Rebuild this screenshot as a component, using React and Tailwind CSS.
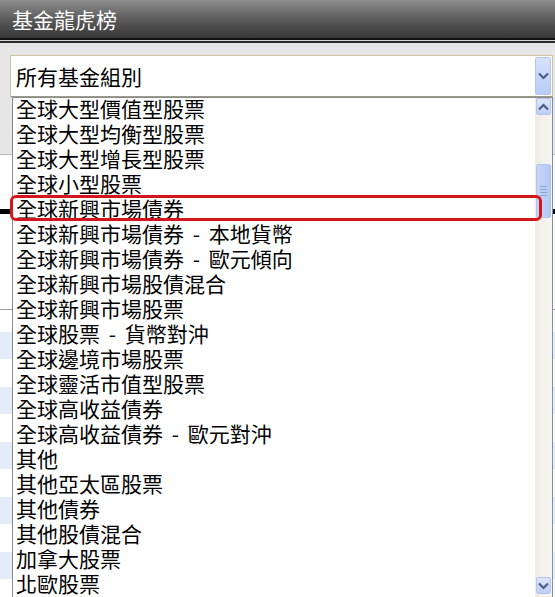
import React from "react";

const items = [
  "全球大型價值型股票",
  "全球大型均衡型股票",
  "全球大型增長型股票",
  "全球小型股票",
  "全球新興市場債券",
  "全球新興市場債券 - 本地貨幣",
  "全球新興市場債券 - 歐元傾向",
  "全球新興市場股債混合",
  "全球新興市場股票",
  "全球股票 - 貨幣對沖",
  "全球邊境市場股票",
  "全球靈活市值型股票",
  "全球高收益債券",
  "全球高收益債券 - 歐元對沖",
  "其他",
  "其他亞太區股票",
  "其他債券",
  "其他股債混合",
  "加拿大股票",
  "北歐股票",
];

function ChevronDown() {
  return (
    <svg width="11" height="8" viewBox="0 0 11 8">
      <path d="M1 1.5 L5.5 6 L10 1.5" fill="none" stroke="#4a5d82" strokeWidth="2.2" />
    </svg>
  );
}

function ChevronUp() {
  return (
    <svg width="11" height="8" viewBox="0 0 11 8">
      <path d="M1 6.5 L5.5 2 L10 6.5" fill="none" stroke="#4a5d82" strokeWidth="2.2" />
    </svg>
  );
}

export default function App() {
  return (
    <div
      className="relative w-[555px] h-[597px] overflow-hidden bg-white flex flex-col"
      style={{ fontFamily: '"Noto Sans CJK TC", "Noto Sans", sans-serif' }}
    >
      {/* Title bar */}
      <div className="h-[38px] shrink-0 bg-gradient-to-b from-[#8f8f8f] via-[#5c5c5c] to-[#363636] flex items-center pl-[12px]">
        <span className="text-white text-[21px] leading-[26px]">基金龍虎榜</span>
      </div>
      <div className="h-[2px] bg-[#101010] shrink-0" />
      <div className="h-px bg-[#d4d4d4] shrink-0" />
      <div className="h-[2px] bg-[#2a2a2a] shrink-0" />

      {/* Gray filter area */}
      <div className="h-[112px] shrink-0 bg-[#e6e6e6] border-b border-[#b8b8b8] pt-[12px] pl-[10px] pr-[2px]">
        <div className="h-[42px] bg-white border border-[#d2c398] border-b-[#9c9a8c] flex items-center pl-[5px] pr-px">
          <span className="flex-1 text-[21px] leading-[26px] text-black">所有基金組別</span>
          <div className="w-[16px] h-[38px] rounded-[2px] border border-[#b3c5ee] bg-gradient-to-b from-[#d6e2fb] to-[#b8cdf6] flex items-center justify-center">
            <ChevronDown />
          </div>
        </div>
      </div>

      {/* Page content behind the list */}
      <div className="flex-1 flex flex-col bg-white">
        <div className="h-[54px] shrink-0" />
        <div className="h-[5px] bg-black shrink-0" />
        <div className="h-[95px] shrink-0" />
        <div className="h-px bg-[#9a9a9a] shrink-0" />
        <div className="h-[22px] shrink-0" />
        <div className="h-[27px] bg-[#e4ecf8] shrink-0" />
        <div className="h-[28px] shrink-0" />
        <div className="h-[27px] bg-[#e4ecf8] shrink-0" />
        <div className="h-[28px] shrink-0" />
        <div className="h-[27px] bg-[#e4ecf8] shrink-0" />
        <div className="h-[28px] shrink-0" />
        <div className="h-[27px] bg-[#e4ecf8] shrink-0" />
        <div className="h-[28px] shrink-0" />
        <div className="h-[27px] bg-[#e4ecf8] shrink-0" />
      </div>

      {/* Dropdown list overlay */}
      <div className="absolute left-[12px] top-[97px] w-[541px] h-[501px] bg-white border border-[#8a8a8a] border-r-[#7d8db0] flex">
        <div className="flex-1 flex flex-col -mt-[2px] overflow-hidden">
          {items.map((t) => (
            <div
              key={t}
              className="h-[25px] shrink-0 pl-[3px] text-[21px] leading-[25px] text-black whitespace-nowrap [word-spacing:4px]"
            >
              {t}
            </div>
          ))}
        </div>
        {/* Scrollbar */}
        <div className="w-[17px] flex flex-col bg-gradient-to-r from-[#eeece4] to-[#f7f6f1]">
          <div className="h-[17px] mx-px rounded-[2px] border border-[#b3c5ee] bg-gradient-to-b from-[#dce6fb] to-[#bccff6] flex items-center justify-center">
            <ChevronUp />
          </div>
          <div className="flex-1">
            <div className="mt-[49px] mx-px h-[54px] rounded-[2px] border border-[#b3c5ee] bg-gradient-to-r from-[#c5d6f8] to-[#b5c9f3] flex flex-col items-center justify-center gap-[2px]">
              <div className="w-[7px] h-px bg-[#8da3d4]" />
              <div className="w-[7px] h-px bg-[#8da3d4]" />
              <div className="w-[7px] h-px bg-[#8da3d4]" />
              <div className="w-[7px] h-px bg-[#8da3d4]" />
            </div>
          </div>
          <div className="h-[17px] mx-px mb-[3px] rounded-[2px] border border-[#b3c5ee] bg-gradient-to-b from-[#dce6fb] to-[#bccff6] flex items-center justify-center">
            <ChevronDown />
          </div>
        </div>
        {/* Highlight box */}
        <div className="absolute left-[-3px] top-[97px] w-[532px] h-[26px] rounded-[6px] border-[3px] border-[#d3161b]" />
      </div>
    </div>
  );
}
